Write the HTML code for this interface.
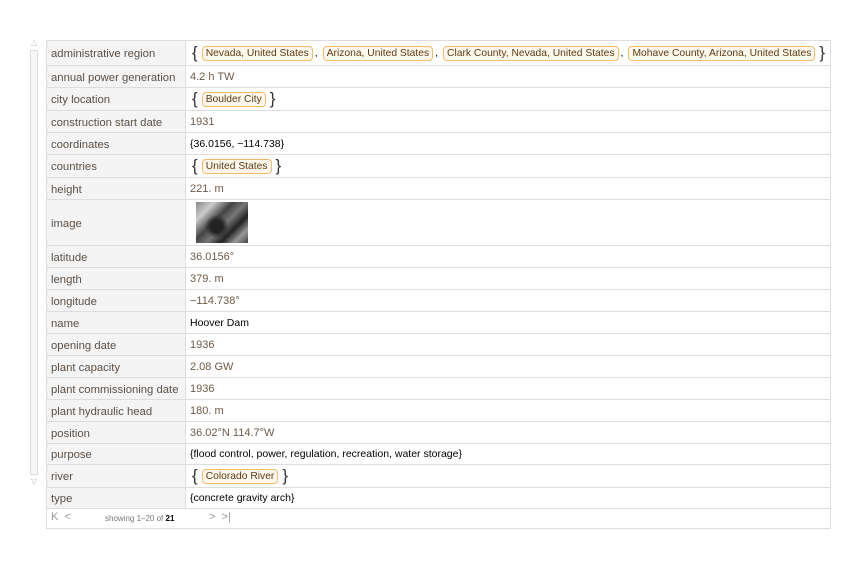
<!DOCTYPE html><html><head><style>
body{margin:0;width:860px;height:565px;background:#fff;font-family:"Liberation Sans",sans-serif;position:relative;overflow:hidden}
.t{position:absolute;left:46px;top:40px;width:783px;border:1px solid #ddd;border-bottom:none}
.r{display:flex;border-bottom:1px solid #ddd;box-sizing:border-box}
.l{width:139px;background:#f4f4f4;border-right:1px solid #ddd;color:#5a5048;font-size:11.3px;padding-left:4px;padding-top:2px;display:flex;align-items:center;box-sizing:border-box;flex:none;white-space:nowrap}
.v{flex:1;font-size:10.5px;padding-left:4px;display:flex;align-items:center;color:#000;white-space:nowrap}
.q{color:#6e5a48;font-size:11px}
.b{font-size:17px;font-weight:300;color:#333;margin:0 2px}
.c{border:1px solid #f5b96a;background:#fff8ec;border-radius:4px;padding:1px 3px;color:#5a3a18;font-size:10.3px;margin:0 2px}
.f{height:19px;background:#fff;border-bottom:1px solid #ddd;font-size:8px;color:#777;position:relative}
.sb{position:absolute;left:30px;top:50px;width:8px;height:425px;border:1px solid #ddd;background:#f7f7f7;box-sizing:border-box}
</style></head><body>
<div style="position:absolute;left:31px;top:38px;font-size:8px;color:#bbb">△</div>
<div class="sb"></div>
<div style="position:absolute;left:31px;top:477px;font-size:8px;color:#bbb">▽</div>
<div class="t">
<div class="r" style="height:25px"><div class="l">administrative region</div><div class="v"><span class="b">{</span><span class="c">Nevada, United States</span>,<span class="c" style="margin-left:5px">Arizona, United States</span>,<span class="c" style="margin-left:5px">Clark County, Nevada, United States</span>,<span class="c" style="margin-left:5px">Mohave County, Arizona, United States</span><span class="b">}</span></div></div>
<div class="r" style="height:22px"><div class="l">annual power generation</div><div class="v q">4.2 h TW</div></div>
<div class="r" style="height:23px"><div class="l">city location</div><div class="v"><span class="b">{</span><span class="c">Boulder City</span><span class="b">}</span></div></div>
<div class="r" style="height:22px"><div class="l">construction start date</div><div class="v q">1931</div></div>
<div class="r" style="height:22px"><div class="l">coordinates</div><div class="v">{36.0156, −114.738}</div></div>
<div class="r" style="height:23px"><div class="l">countries</div><div class="v"><span class="b">{</span><span class="c">United States</span><span class="b">}</span></div></div>
<div class="r" style="height:22px"><div class="l">height</div><div class="v q">221. m</div></div>
<div class="r" style="height:46px"><div class="l">image</div><div class="v"><div style="width:52px;height:41px;margin-left:6px;background:radial-gradient(circle at 40% 60%,#222 15%,transparent 30%),linear-gradient(135deg,#888,#ccc 20%,#444 40%,#777 55%,#222 70%,#999 85%,#444)"></div></div></div>
<div class="r" style="height:22px"><div class="l">latitude</div><div class="v q">36.0156°</div></div>
<div class="r" style="height:22px"><div class="l">length</div><div class="v q">379. m</div></div>
<div class="r" style="height:22px"><div class="l">longitude</div><div class="v q">−114.738°</div></div>
<div class="r" style="height:22px"><div class="l">name</div><div class="v">Hoover Dam</div></div>
<div class="r" style="height:22px"><div class="l">opening date</div><div class="v q">1936</div></div>
<div class="r" style="height:22px"><div class="l">plant capacity</div><div class="v q">2.08 GW</div></div>
<div class="r" style="height:22px"><div class="l">plant commissioning date</div><div class="v q">1936</div></div>
<div class="r" style="height:22px"><div class="l">plant hydraulic head</div><div class="v q">180. m</div></div>
<div class="r" style="height:22px"><div class="l">position</div><div class="v q">36.02°N 114.7°W</div></div>
<div class="r" style="height:21px"><div class="l">purpose</div><div class="v">{flood control, power, regulation, recreation, water storage}</div></div>
<div class="r" style="height:23px"><div class="l">river</div><div class="v"><span class="b">{</span><span class="c">Colorado River</span><span class="b">}</span></div></div>
<div class="r" style="height:21px"><div class="l">type</div><div class="v">{concrete gravity arch}</div></div>
<div class="f"><span style="position:absolute;left:4px;top:2px;font-size:11px;color:#999">K&nbsp;&nbsp;&lt;</span><span style="position:absolute;left:58px;top:5px">showing 1–20 of <b style="color:#000">21</b></span><span style="position:absolute;left:162px;top:2px;font-size:11px;color:#999">&gt;&nbsp;&nbsp;&gt;|</span></div>
</div>
</body></html>
